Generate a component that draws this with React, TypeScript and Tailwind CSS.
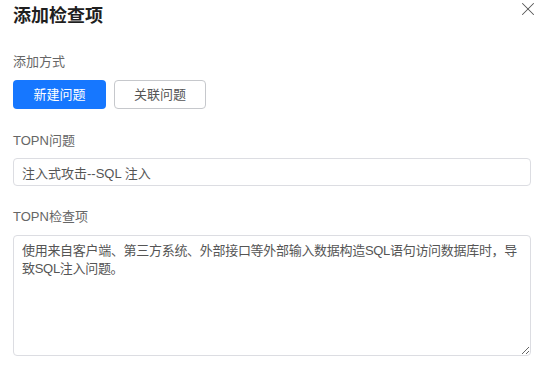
import { X } from "lucide-react";

const font = { fontFamily: '"Liberation Sans", "Noto Sans CJK SC", sans-serif' };

function Label({ children, className = "" }: { children: React.ReactNode; className?: string }) {
  return <div className={`h-[20px] text-[13px] leading-[20px] text-[#666] ${className}`}>{children}</div>;
}

export default function App() {
  return (
    <div className="relative h-[374px] w-[552px] bg-white" style={font}>
      <button className="absolute left-[517px] top-[-2px] text-[#555]">
        <X size={22} strokeWidth={1.1} />
      </button>

      <div className="flex flex-col pl-[13px] pr-[21px] pt-[4px]">
        <h1 className="h-[24px] text-[18px] font-bold leading-[24px] text-[#1f1f1f]">添加检查项</h1>

        <Label className="mt-[24px]">添加方式</Label>
        <div className="mt-[8px] flex gap-[8px]">
          <button className="h-[29px] w-[93px] rounded-[4px] bg-[#1677ff] text-[13px] text-white">新建问题</button>
          <button className="h-[29px] w-[92px] rounded-[4px] border border-[#c6c8cc] bg-white text-[13px] text-[#555]">
            关联问题
          </button>
        </div>

        <Label className="mt-[22px]">TOPN问题</Label>
        <input
          className="mt-[7px] h-[28px] w-full rounded-[4px] border border-[#dcdde2] px-[8px] text-[13px] text-[#555] outline-none"
          defaultValue="注入式攻击--SQL 注入"
          style={font}
        />

        <Label className="mt-[21px]">TOPN检查项</Label>
        <textarea
          className="mt-[8px] h-[121px] w-full resize-y overflow-hidden rounded-[4px] border border-[#dcdde2] py-[6px] pl-[8px] pr-[4px] text-[13px] leading-[17.5px] tracking-[-0.3px] text-[#555] outline-none"
          defaultValue="使用来自客户端、第三方系统、外部接口等外部输入数据构造SQL语句访问数据库时，导致SQL注入问题。"
          style={font}
        />
      </div>
    </div>
  );
}
